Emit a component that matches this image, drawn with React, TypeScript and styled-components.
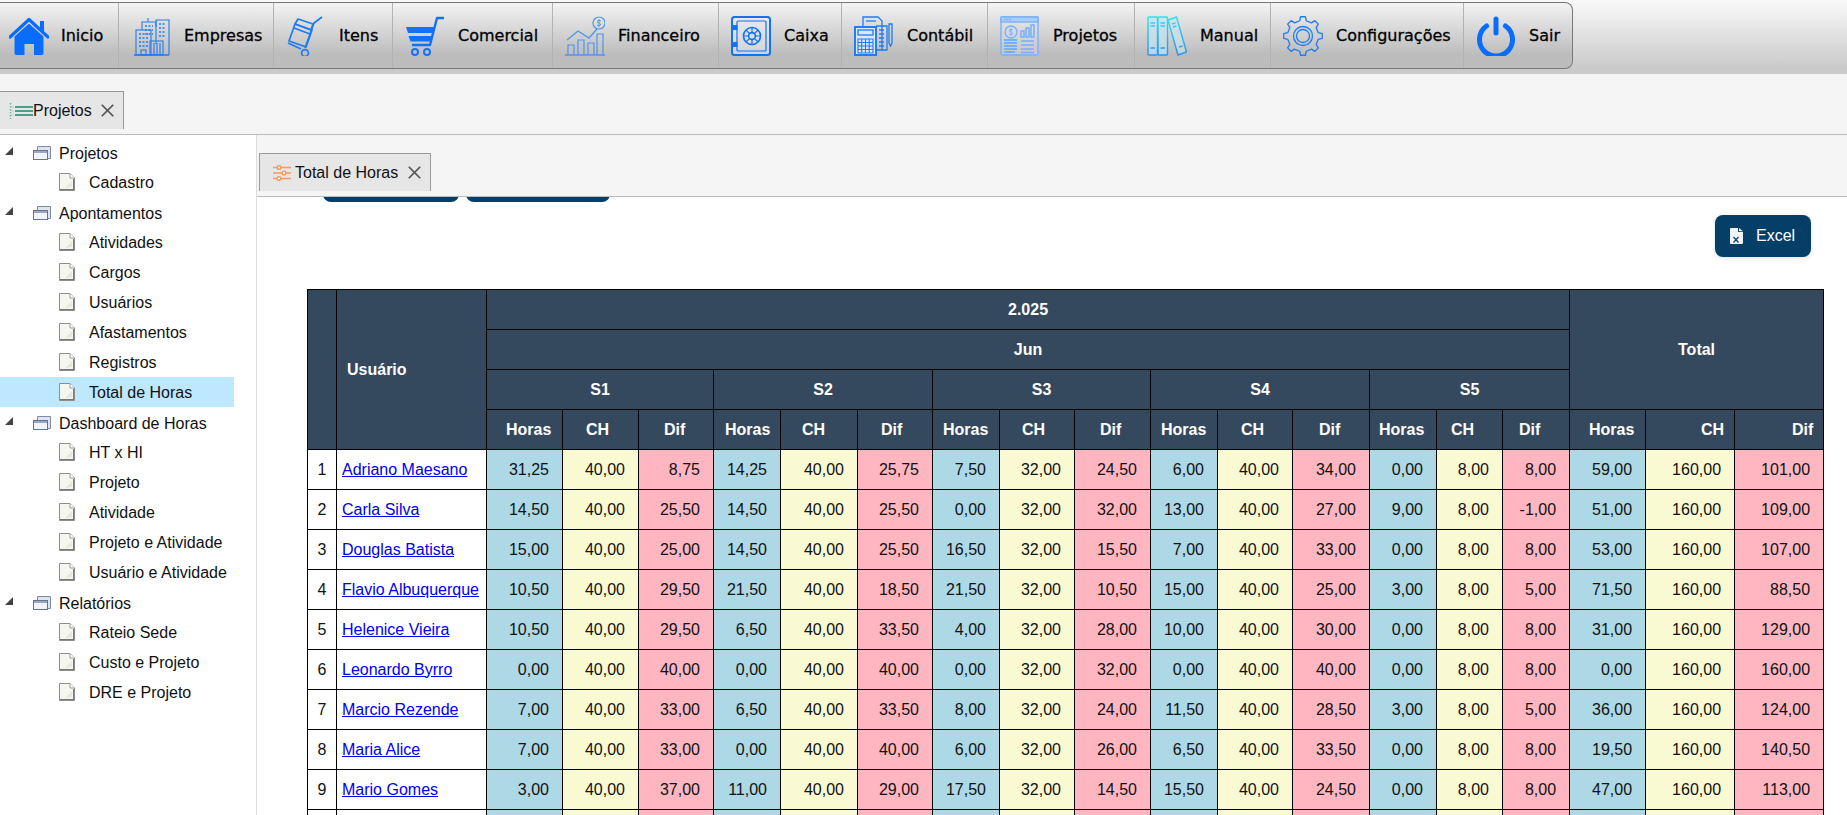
import React from "react";
import styled, { createGlobalStyle } from "styled-components";
import { X } from "lucide-react";

const GlobalStyle = createGlobalStyle`
  html, body {
    margin: 0;
    padding: 0;
    height: 815px;
    overflow: hidden;
    background: #f5f5f5;
    font-family: "Liberation Sans", Arial, sans-serif;
    font-size: 16px;
    color: #111;
  }
`;

const BLUE = "#1f7cf0";

const gearPath = () => {
  const teeth = 8;
  const pts: string[] = [];
  for (let i = 0; i < teeth; i++) {
    const a = (i / teeth) * Math.PI * 2;
    const step = (Math.PI * 2) / teeth;
    const at = (r: number, t: number) =>
      `${(20 + r * Math.cos(t)).toFixed(2)} ${(20 + r * Math.sin(t)).toFixed(2)}`;
    pts.push(`${i === 0 ? "M" : "L"}${at(15.6, a - step * 0.27)}`);
    pts.push(`L${at(19.4, a - step * 0.16)}`);
    pts.push(`L${at(19.4, a + step * 0.16)}`);
    pts.push(`L${at(15.6, a + step * 0.27)}`);
  }
  return pts.join(" ") + "Z";
};

const HomeIcon = () => (
  <svg width="40" height="40" viewBox="0 0 40 40">
    <path d="M1 21 L20 3.5 L39 21" fill="none" stroke="#0a6cff" strokeWidth="3.2" strokeLinecap="round" strokeLinejoin="round" />
    <rect x="31" y="5" width="4" height="10" fill="#0a6cff" />
    <path d="M5.5 20.5 L20 7.5 L34.5 20.5 V37 Q34.5 39 32.5 39 H25 V28 H15.5 V39 H7.5 Q5.5 39 5.5 37Z" fill="#0a6cff" />
  </svg>
);

const BuildingIcon = () => (
  <svg width="40" height="40" viewBox="0 0 40 40" fill="none" stroke={BLUE} strokeWidth="1.1">
    <path d="M3 39 H38" strokeWidth="1.4" />
    <rect x="5" y="14" width="15" height="25" />
    <path d="M11 14 V6 H25 V28" />
    <path d="M17 6 V2 M25 11 V4 H38 V39" />
    <rect x="19" y="25" width="13" height="14" />
    <path d="M23 27 V39 M26 27 V39 M29 27 V39" />
    <path d="M8 18 H17 M8 22 H17 M8 26 H17 M8 30 H17 M28 8 H35 M28 12 H35 M28 16 H35 M28 20 H35 M14 10 H22 M14 14 H22 M14 18 H22" strokeDasharray="2 1.5" strokeWidth="1.4" />
    <rect x="10" y="34" width="5" height="5" />
  </svg>
);

const DollyIcon = () => (
  <svg width="40" height="40" viewBox="0 0 40 40" fill="none" stroke={BLUE} strokeWidth="1.7" strokeLinejoin="round">
    <path d="M36 1 L28 7 L19 32" />
    <path d="M2 27 L15 33" />
    <circle cx="19" cy="37" r="3.4" />
    <path d="M9 8 L26 14 L20 31 L3 25Z" />
    <path d="M8 12 L24 18" />
    <path d="M12 3 L27 8 L25 14 L9 8Z" />
  </svg>
);

const CartIcon = () => (
  <svg width="40" height="40" viewBox="0 0 40 40" fill="none" stroke="#1272f5" strokeWidth="2.4">
    <path d="M39 2 H32 L25 29 H7" strokeLinejoin="round" />
    <path d="M1 11 H30 L28.5 17 H3Z" fill="#1272f5" stroke="none" />
    <path d="M3.5 20 H28 L26.5 25.5 H5.5Z" fill="#1272f5" stroke="none" />
    <circle cx="10" cy="36" r="3" strokeWidth="2" />
    <circle cx="22" cy="36" r="3" strokeWidth="2" />
  </svg>
);

const FinanceIcon = () => (
  <svg width="40" height="40" viewBox="0 0 40 40" fill="none" stroke="#4f95ee" strokeWidth="1.2">
    <path d="M0 39 H40" strokeWidth="1.6" />
    <path d="M3 39 V29 H9 V39 M13 39 V24 H19 V39 M23 39 V27 H29 V39 M32 39 V18 H38 V39" />
    <path d="M2 24 L13 15 L24 22 L32 13" strokeWidth="1.4" />
    <circle cx="34" cy="7" r="6" />
    <path d="M36 5 Q34 3.5 32.5 5 Q32 7 34 7 Q36 7.5 35.5 9 Q34 10.5 32 9 M34 3 V11" strokeWidth="0.9" />
  </svg>
);

const SafeIcon = () => (
  <svg width="40" height="40" viewBox="0 0 40 40" fill="none" stroke="#1272f5">
    <rect x="1" y="1" width="38" height="38" rx="2.5" strokeWidth="2" fill="#e8f0fb" fillOpacity="0.45" />
    <rect x="6" y="5" width="29" height="30" rx="1" strokeWidth="1.2" />
    <rect x="0.5" y="9" width="6" height="5" fill="#1272f5" stroke="none" />
    <rect x="0.5" y="26" width="6" height="5" fill="#1272f5" stroke="none" />
    <circle cx="21" cy="20" r="8.5" strokeWidth="1.6" />
    <circle cx="21" cy="20" r="3.4" strokeWidth="1.6" />
    <path d="M21 11.5 V16.6 M21 23.4 V28.5 M12.5 20 H17.6 M24.4 20 H29.5 M15 14 L18.6 17.6 M23.4 22.4 L27 26 M27 14 L23.4 17.6 M18.6 22.4 L15 26" strokeWidth="1.2" />
  </svg>
);

const CalcIcon = () => (
  <svg width="40" height="40" viewBox="0 0 40 40" fill="none" stroke="#1f7cf0" strokeWidth="1.3">
    <path d="M9 10 V1 H24 L28 5 V35" />
    <path d="M12 5 H22" />
    <path d="M22 10 H33 V34 H22" />
    <path d="M25 14 H30 M25 18 H30 M25 22 H30 M25 26 H30 M25 30 H30" strokeWidth="1.6" />
    <path d="M35 8 H38 V27 L36.5 30 L35 27Z" />
    <rect x="1" y="11" width="21" height="28" fill="#dce9fa" stroke="#1272f5" strokeWidth="1.8" />
    <rect x="4" y="14" width="15" height="5" />
    <path d="M4 23 H19 V37 H4Z M7.7 23 V37 M11.5 23 V37 M15.2 23 V37 M4 26.5 H19 M4 30 H19 M4 33.5 H19" strokeWidth="1.1" />
  </svg>
);

const ReportIcon = () => (
  <svg width="40" height="40" viewBox="0 0 40 40" fill="none" stroke="#77b0f8" strokeWidth="1.3">
    <rect x="1" y="1" width="37" height="38" rx="1.5" fill="#dbe8f8" fillOpacity="0.25" />
    <rect x="1" y="1" width="37" height="5" fill="#a9ccf8" />
    <path d="M4 3.5 H11" strokeDasharray="1.5 1.2" strokeWidth="1.5" />
    <circle cx="11" cy="16" r="6" />
    <path d="M13 14 Q11 12.5 9.5 14 Q9 16 11 16 Q13 16.5 12.5 18 Q11 19.5 9 18 M11 12 V20" strokeWidth="0.9" />
    <path d="M4 24 H17 M4 27 H17 M4 30 H17 M4 33 H17 M4 36 H15" strokeWidth="2" />
    <path d="M21 21 V15 H24 V21Z M26 21 V12 H29 V21Z M31 21 V9 H34 V21Z" strokeWidth="1.5" />
    <path d="M21 25 H34 M21 29 H34 M21 33 H34 M21 36.5 H34" />
  </svg>
);

const BinderIcon = () => (
  <svg width="40" height="40" viewBox="0 0 40 40" fill="none" stroke="url(#binderFade)" strokeWidth="1.4">
    <defs>
      <linearGradient id="binderFade" gradientUnits="userSpaceOnUse" x1="0" y1="0" x2="0" y2="40">
        <stop offset="0" stopColor="#35e0ee" />
        <stop offset="1" stopColor="#2a8ef0" />
      </linearGradient>
    </defs>
    <rect x="1" y="1" width="9.5" height="38" rx="1" fill="#bfe6f5" fillOpacity="0.6" />
    <rect x="11" y="1" width="9.5" height="38" rx="1" fill="#bfe6f5" fillOpacity="0.6" />
    <path d="M21 4 L29.5 1 L39.5 36 L31 39Z" fill="#bfe6f5" fillOpacity="0.6" />
    <path d="M3.5 7 H8 M3.5 10 H8 M3.5 32 H8 M13.5 7 H18 M13.5 10 H18 M13.5 32 H18 M25 8 L28.5 7 M26 11 L29.5 10 M32 31 L35.5 30" strokeWidth="1.5" />
  </svg>
);

const GearIcon = () => (
  <svg width="40" height="40" viewBox="0 0 40 40" fill="none" stroke="#1f7cf0" strokeWidth="1.3" strokeLinejoin="round">
    <path d={gearPath()} />
    <circle cx="20" cy="20" r="9.5" />
    <circle cx="20" cy="20" r="6.5" />
  </svg>
);

const PowerIcon = () => (
  <svg width="40" height="40" viewBox="0 0 40 40" fill="none" stroke="#0a6cff" strokeLinecap="round">
    <path d="M20 3 V17" strokeWidth="5" />
    <path d="M10.5 10 A16.5 16.5 0 1 0 29.5 10" strokeWidth="5" />
  </svg>
);

const ListIcon = () => (
  <svg width="24" height="16" viewBox="0 0 24 16" fill="none" stroke="#4b9e8d">
    <path d="M1.5 0 V16" strokeWidth="1.5" strokeDasharray="1.5 1.5" stroke="#6fb8a6" />
    <path d="M2 4 H5 M2 8 H5 M2 12 H5" strokeWidth="0.8" stroke="#9bcfc2" />
    <path d="M6 4 H24 M6 8 H24 M6 12 H24" strokeWidth="2.2" />
  </svg>
);

const SlidersIcon = () => (
  <svg width="18" height="16" viewBox="0 0 18 16" fill="none" stroke="#f59a62" strokeWidth="1.5">
    <path d="M0 2.5 H18 M0 8 H18 M0 13.5 H18" />
    <circle cx="6" cy="2.5" r="1.8" fill="#fff" />
    <circle cx="11" cy="8" r="1.8" fill="#fff" />
    <circle cx="6" cy="13.5" r="1.8" fill="#fff" />
  </svg>
);

const FolderIcon = () => (
  <svg width="18" height="14" viewBox="0 0 18 14">
    <path d="M4.5 4 V.5 H17.5 V12.5 H14" fill="#dfe4ee" stroke="#7c8aa8" />
    <rect x=".5" y="4.5" width="14" height="9" fill="#f1f3f8" stroke="#66758f" />
    <rect x="1" y="5" width="13" height="2" fill="#9aa7c3" />
  </svg>
);

const DocIcon = () => (
  <svg width="16" height="18" viewBox="0 0 16 18">
    <path d="M.5 .5 H11 L15.5 5 V17.5 H.5Z" fill="#f6f6f0" stroke="#8d8d8d" />
    <path d="M11 .5 V5 H15.5" fill="#fff" stroke="#9a9a9a" />
    <path d="M15 6 V17 H1 V16 H14 V6Z" fill="#777" />
    <path d="M6 15 L13 8 V14 Z" fill="#e6e6dc" />
  </svg>
);

const TriangleIcon = () => (
  <svg width="8" height="8" viewBox="0 0 8 8">
    <path d="M0 8 L8 0 V8Z" fill="#444" />
  </svg>
);

const ExcelIcon = () => (
  <svg width="13" height="16" viewBox="0 0 13 16">
    <path d="M0 1 Q0 0 1 0 H8 V4 H13 V15 Q13 16 12 16 H1 Q0 16 0 15Z M9 0 L13 3.2 H9Z" fill="#eef3f8" />
    <path d="M3.5 9 L8.5 14.5 M8.5 9 L3.5 14.5" stroke="#053e66" strokeWidth="1.2" />
  </svg>
);

const menuItems = [
  { label: "Inicio", width: 119, icon: <HomeIcon />, first: true },
  { label: "Empresas", width: 155, icon: <BuildingIcon /> },
  { label: "Itens", width: 119, icon: <DollyIcon /> },
  { label: "Comercial", width: 160, icon: <CartIcon /> },
  { label: "Financeiro", width: 166, icon: <FinanceIcon /> },
  { label: "Caixa", width: 123, icon: <SafeIcon /> },
  { label: "Contábil", width: 146, icon: <CalcIcon /> },
  { label: "Projetos", width: 147, icon: <ReportIcon /> },
  { label: "Manual", width: 136, icon: <BinderIcon /> },
  { label: "Configurações", width: 193, icon: <GearIcon /> },
  { label: "Sair", width: 109, icon: <PowerIcon /> },
];

const tree = [
  { label: "Projetos", items: ["Cadastro"] },
  { label: "Apontamentos", items: ["Atividades", "Cargos", "Usuários", "Afastamentos", "Registros", "Total de Horas"] },
  { label: "Dashboard de Horas", items: ["HT x HI", "Projeto", "Atividade", "Projeto e Atividade", "Usuário e Atividade"] },
  { label: "Relatórios", items: ["Rateio Sede", "Custo e Projeto", "DRE e Projeto"] },
];

const weeks = ["S1", "S2", "S3", "S4", "S5"];
const weekHours = ["40,00", "40,00", "32,00", "40,00", "8,00"];

// largura das colunas, a partir de S1 Horas
const colWidths = [76, 76, 75, 67, 77, 75, 67, 75, 76, 67, 75, 77, 67, 66, 67, 76, 89, 89];
// recuo do titulo de cada coluna
const headLefts = [19, 23, 25, 11, 21, 23, 10, 22, 25, 10, 23, 26, 9, 14, 16, 19, 55, 57];
const headLabels = ["Horas", "CH", "Dif"];

const rows = [
  { name: "Adriano Maesano", weeks: [["31,25", "8,75"], ["14,25", "25,75"], ["7,50", "24,50"], ["6,00", "34,00"], ["0,00", "8,00"]], total: ["59,00", "101,00"] },
  { name: "Carla Silva", weeks: [["14,50", "25,50"], ["14,50", "25,50"], ["0,00", "32,00"], ["13,00", "27,00"], ["9,00", "-1,00"]], total: ["51,00", "109,00"] },
  { name: "Douglas Batista", weeks: [["15,00", "25,00"], ["14,50", "25,50"], ["16,50", "15,50"], ["7,00", "33,00"], ["0,00", "8,00"]], total: ["53,00", "107,00"] },
  { name: "Flavio Albuquerque", weeks: [["10,50", "29,50"], ["21,50", "18,50"], ["21,50", "10,50"], ["15,00", "25,00"], ["3,00", "5,00"]], total: ["71,50", "88,50"] },
  { name: "Helenice Vieira", weeks: [["10,50", "29,50"], ["6,50", "33,50"], ["4,00", "28,00"], ["10,00", "30,00"], ["0,00", "8,00"]], total: ["31,00", "129,00"] },
  { name: "Leonardo Byrro", weeks: [["0,00", "40,00"], ["0,00", "40,00"], ["0,00", "32,00"], ["0,00", "40,00"], ["0,00", "8,00"]], total: ["0,00", "160,00"] },
  { name: "Marcio Rezende", weeks: [["7,00", "33,00"], ["6,50", "33,50"], ["8,00", "24,00"], ["11,50", "28,50"], ["3,00", "5,00"]], total: ["36,00", "124,00"] },
  { name: "Maria Alice", weeks: [["7,00", "33,00"], ["0,00", "40,00"], ["6,00", "26,00"], ["6,50", "33,50"], ["0,00", "8,00"]], total: ["19,50", "140,50"] },
  { name: "Mario Gomes", weeks: [["3,00", "37,00"], ["11,00", "29,00"], ["17,50", "14,50"], ["15,50", "24,50"], ["0,00", "8,00"]], total: ["47,00", "113,00"] },
];

const App: React.FC = () => {
  return (
    <Page>
      <GlobalStyle />
      <TopBand>
        <Menu>
          {menuItems.map((item) => (
            <MenuButton key={item.label} $width={item.width} $first={item.first}>
              {item.icon}
              <MenuLabel>{item.label}</MenuLabel>
            </MenuButton>
          ))}
        </Menu>
      </TopBand>

      <TabStrip>
        <OuterTab>
          <ListIcon />
          Projetos
          <CloseIcon size={21} strokeWidth={2} />
        </OuterTab>
      </TabStrip>

      <Body>
        <Sidebar>
          {tree.map((group) => (
            <React.Fragment key={group.label}>
              <TreeRow>
                <Arrow>
                  <TriangleIcon />
                </Arrow>
                <FolderIcon />
                <GroupLabel>{group.label}</GroupLabel>
              </TreeRow>
              {group.items.map((item) => (
                <LeafRow key={item} $active={item === "Total de Horas"}>
                  <DocIcon />
                  <LeafLabel>{item}</LeafLabel>
                </LeafRow>
              ))}
            </React.Fragment>
          ))}
        </Sidebar>

        <Main>
          <InnerTabStrip>
            <InnerTab>
              <SlidersIcon />
              Total de Horas
              <CloseIcon size={21} strokeWidth={2} />
            </InnerTab>
          </InnerTabStrip>

          <Panel>
            <ClippedActions>
              <HiddenAction $width={136} />
              <HiddenAction $width={144} />
            </ClippedActions>

            <ExportRow>
              <ExcelButton>
                <ExcelIcon />
                Excel
              </ExcelButton>
            </ExportRow>

            <HoursTable>
              <colgroup>
                <col style={{ width: 29 }} />
                <col style={{ width: 150 }} />
                {colWidths.map((w, i) => (
                  <col key={i} style={{ width: w }} />
                ))}
              </colgroup>
              <thead>
                <tr>
                  <HeadCell rowSpan={4} />
                  <UserHead rowSpan={4}>Usuário</UserHead>
                  <HeadCell colSpan={15}>2.025</HeadCell>
                  <HeadCell colSpan={3} rowSpan={3}>
                    Total
                  </HeadCell>
                </tr>
                <tr>
                  <HeadCell colSpan={15}>Jun</HeadCell>
                </tr>
                <tr>
                  {weeks.map((w) => (
                    <HeadCell key={w} colSpan={3}>
                      {w}
                    </HeadCell>
                  ))}
                </tr>
                <tr>
                  {colWidths.map((_, i) => (
                    <ColumnHead key={i} $left={headLefts[i]}>
                      {headLabels[i % 3]}
                    </ColumnHead>
                  ))}
                </tr>
              </thead>
              <tbody>
                {rows.map((row, i) => (
                  <tr key={row.name}>
                    <IndexCell>{i + 1}</IndexCell>
                    <NameCell>
                      <a href="#">{row.name}</a>
                    </NameCell>
                    {row.weeks.map((week, w) => (
                      <React.Fragment key={w}>
                        <ValueCell $kind="hours">{week[0]}</ValueCell>
                        <ValueCell $kind="load">{weekHours[w]}</ValueCell>
                        <ValueCell $kind="diff">{week[1]}</ValueCell>
                      </React.Fragment>
                    ))}
                    <ValueCell $kind="hours">{row.total[0]}</ValueCell>
                    <ValueCell $kind="load">160,00</ValueCell>
                    <ValueCell $kind="diff">{row.total[1]}</ValueCell>
                  </tr>
                ))}
                <tr>
                  <IndexCell />
                  <NameCell />
                  {colWidths.map((_, i) => (
                    <ValueCell key={i} $kind={(["hours", "load", "diff"] as const)[i % 3]} />
                  ))}
                </tr>
              </tbody>
            </HoursTable>
          </Panel>
        </Main>
      </Body>
    </Page>
  );
};

export default App;

const Page = styled.div`
  width: 1847px;
  height: 815px;
  overflow: hidden;
  display: flex;
  flex-direction: column;
`;

const TopBand = styled.header`
  height: 74px;
  flex: none;
  box-sizing: border-box;
  padding-top: 2px;
  background: linear-gradient(#f9f9f9, #cacaca 92%);
`;

const Menu = styled.nav`
  display: flex;
  width: 1573px;
  height: 67px;
  box-sizing: border-box;
  border: 1px solid #777;
  border-left: 0;
  border-radius: 0 8px 8px 0;
  background: linear-gradient(#f3f3f3, #bcbcbc 80%, #bdbdbd);
`;

const MenuButton = styled.div<{ $width: number; $first?: boolean }>`
  width: ${(p) => p.$width}px;
  flex: none;
  box-sizing: border-box;
  display: flex;
  align-items: center;
  gap: ${(p) => (p.$first ? 12 : 13)}px;
  padding-left: ${(p) => (p.$first ? 9 : 12)}px;
  border-right: 1px solid #b2b2b2;

  &:last-child {
    border-right: 0;
  }

  svg {
    flex: none;
  }
`;

const MenuLabel = styled.span`
  font-family: "DejaVu Sans", Tahoma, sans-serif;
  font-size: 16px;
  font-weight: 400;
  color: #000;
  -webkit-text-stroke: 0.3px #000;
  white-space: nowrap;
`;

const TabStrip = styled.div`
  flex: none;
  height: 61px;
  box-sizing: border-box;
  padding-top: 17px;
  border-bottom: 1px solid #bbb;
`;

const CloseIcon = styled(X)`
  color: #555;
  margin-left: 5px;
  flex: none;
`;

const OuterTab = styled.div`
  width: 124px;
  height: 38px;
  box-sizing: border-box;
  display: flex;
  align-items: center;
  padding-left: 9px;
  background: #e6e6e6;
  border: 1px solid #999;
  border-left: 0;
  border-bottom: 0;
`;

const Body = styled.div`
  flex: 1;
  display: flex;
  min-height: 0;
`;

const Sidebar = styled.aside`
  width: 257px;
  flex: none;
  box-sizing: border-box;
  padding: 2px 22px 0 0;
  background: #fff;
  border-right: 1px solid #ddd;
`;

const TreeRow = styled.div`
  height: 30px;
  display: flex;
  align-items: center;
  padding-left: 5px;
  white-space: nowrap;

  svg:nth-child(2) {
    margin: 2px 8px 0 0;
  }
`;

const GroupLabel = styled.span`
  padding-top: 4px;
`;

const Arrow = styled.span`
  width: 28px;
  flex: none;
  display: flex;
  margin-top: -3px;
`;

const LeafRow = styled.div<{ $active?: boolean }>`
  height: 30px;
  display: flex;
  align-items: center;
  gap: 14px;
  padding-left: 59px;
  white-space: nowrap;
  background: ${(p) => (p.$active ? "#bde8ff" : "transparent")};
`;

const LeafLabel = styled.span`
  padding-top: 2px;
`;

const Main = styled.main`
  flex: 1;
  min-width: 0;
  display: flex;
  flex-direction: column;
`;

const InnerTabStrip = styled.div`
  flex: none;
  height: 62px;
  box-sizing: border-box;
  padding: 18px 0 0 2px;
  border-bottom: 1px solid #bbb;
`;

const InnerTab = styled.div`
  width: 172px;
  height: 38px;
  box-sizing: border-box;
  display: flex;
  align-items: center;
  gap: 4px;
  padding-left: 13px;
  white-space: nowrap;
  background: #e6e6e6;
  border: 1px solid #999;
  border-bottom: 0;

  ${CloseIcon} {
    margin-left: 2px;
  }
`;

const Panel = styled.section`
  flex: 1;
  min-height: 0;
  overflow: hidden;
  background: #fff;
  padding-left: 50px;
`;

const ClippedActions = styled.div`
  height: 5px;
  display: flex;
  align-items: flex-end;
  gap: 7px;
  padding-left: 16px;
  overflow: hidden;
`;

const HiddenAction = styled.div<{ $width: number }>`
  width: ${(p) => p.$width}px;
  height: 30px;
  flex: none;
  background: #053e66;
  border-radius: 0 0 8px 8px;
`;

const ExportRow = styled.div`
  display: flex;
  justify-content: flex-end;
  padding: 13px 36px 32px 0;
`;

const ExcelButton = styled.button`
  width: 96px;
  height: 42px;
  display: flex;
  align-items: center;
  gap: 13px;
  padding: 0 0 0 15px;
  border: 0;
  border-radius: 8px;
  background: #053e66;
  color: #fff;
  font: inherit;
  box-shadow: 0 1px 4px rgba(5, 62, 102, 0.15);
`;

const HoursTable = styled.table`
  table-layout: fixed;
  width: 1516px;
  border-collapse: collapse;

  th,
  td {
    height: 40px;
    box-sizing: border-box;
    border: 1px solid #000;
    padding: 0;
  }
`;

const HeadCell = styled.th`
  background: #34495e;
  color: #fff;
  font-weight: 700;
  text-align: center;
`;

const UserHead = styled(HeadCell)`
  text-align: left;
  padding-left: 10px !important;
`;

const ColumnHead = styled(HeadCell)<{ $left: number }>`
  text-align: left;
  padding-left: ${(p) => p.$left}px !important;
`;

const IndexCell = styled.td`
  background: #fff;
  text-align: center;
`;

const NameCell = styled.td`
  background: #fff;
  padding-left: 5px !important;
  white-space: nowrap;

  a {
    color: #0000ee;
  }
`;

const kindColors = { hours: "#add8e6", load: "#fafad2", diff: "#ffb6c1" };

const ValueCell = styled.td<{ $kind: keyof typeof kindColors }>`
  background: ${(p) => kindColors[p.$kind]};
  text-align: right;
  padding-right: 13px !important;
`;
